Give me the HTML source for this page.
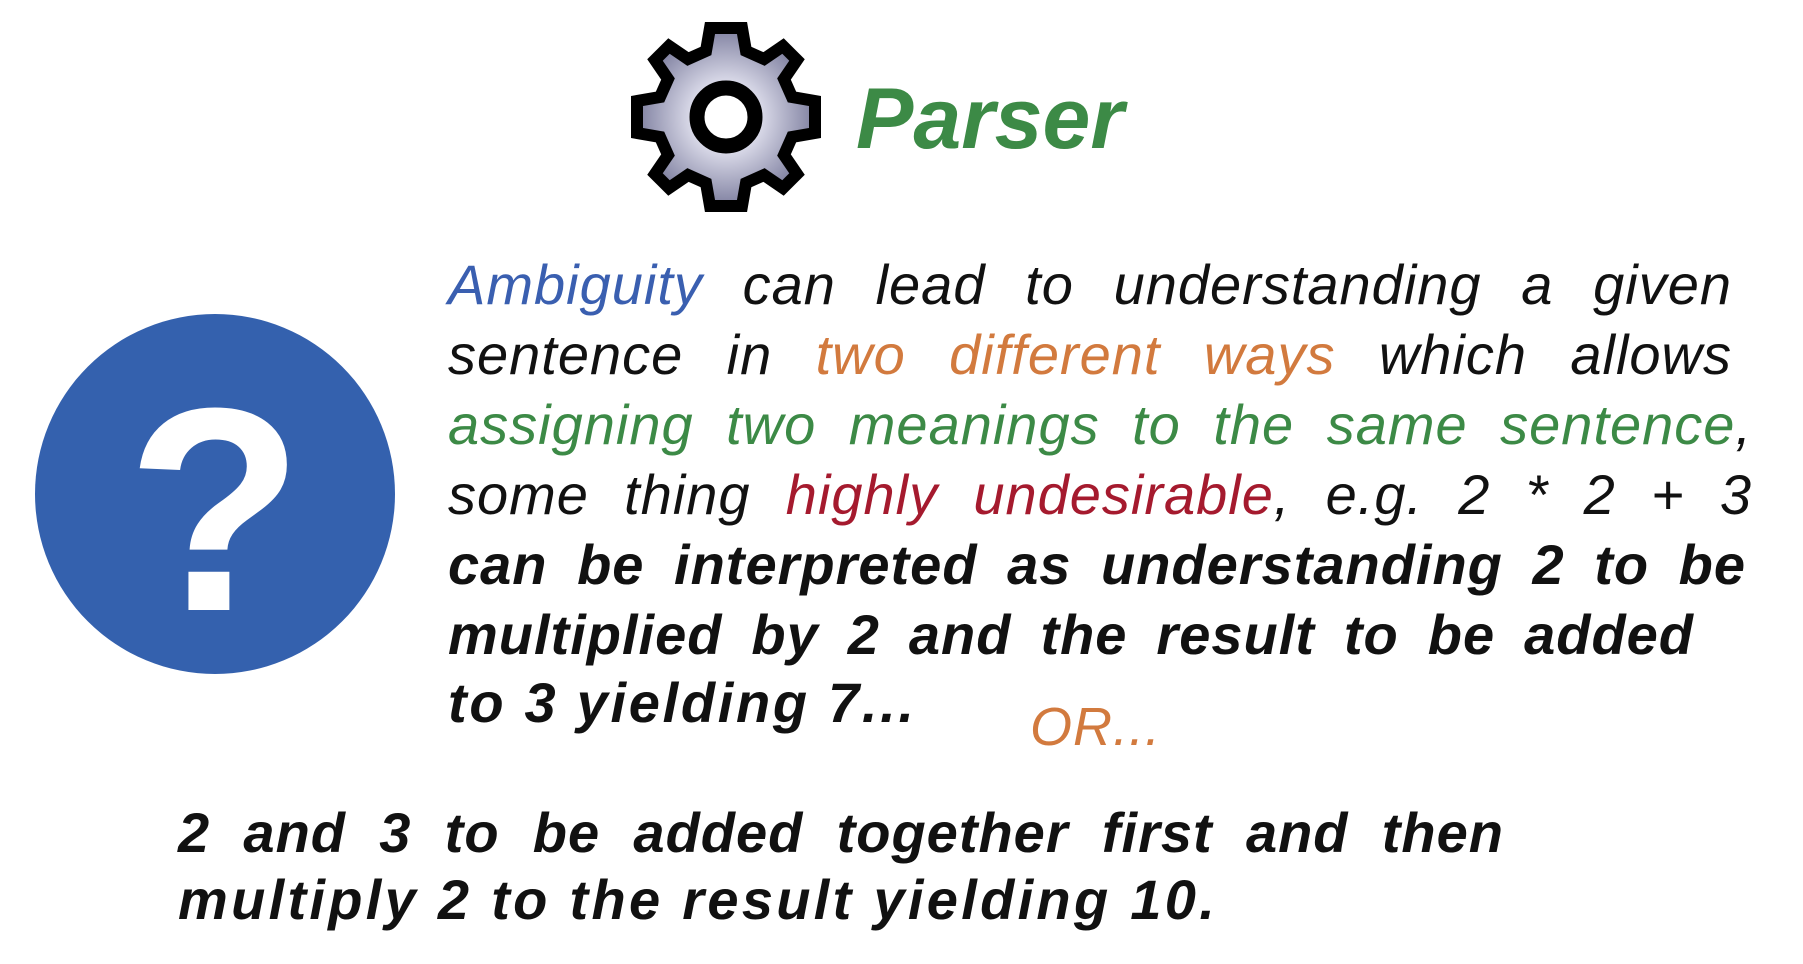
<!DOCTYPE html>
<html><head><meta charset="utf-8"><style>
body{margin:0;width:1803px;height:964px;background:#fff;overflow:hidden;position:relative;font-family:"Liberation Sans",sans-serif;}
.t{position:absolute;font-size:56px;font-style:italic;color:#111;white-space:nowrap;letter-spacing:1px;}
.j{text-align:justify;text-align-last:justify;}
.b{color:#3a5fb0}.o{color:#d27a3e}.g{color:#3c8a46}.r{color:#a51a2e}
</style></head><body>
<svg style="position:absolute;left:0;top:0" width="1803" height="964">
<defs><radialGradient id="gr" cx="50%" cy="50%" r="50%"><stop offset="0.3" stop-color="#e8e8f4"/><stop offset="1" stop-color="#7f80a0"/></radialGradient></defs>
<g transform="translate(726,117)">
<g fill="url(#gr)" stroke="#000" stroke-width="12" stroke-linejoin="miter">
<path d="M-16,-89 L16,-89 L20,-66 L38,-58 L57,-71 L71,-57 L58,-38 L66,-20 L89,-16 L89,16 L66,20 L58,38 L71,57 L57,71 L38,58 L20,66 L16,89 L-16,89 L-20,66 L-38,58 L-57,71 L-71,57 L-58,38 L-66,20 L-89,16 L-89,-16 L-66,-20 L-58,-38 L-71,-57 L-57,-71 L-38,-58 L-20,-66 Z"/>
</g>
<circle r="29" fill="#fff" stroke="#000" stroke-width="15"/>
</g>
<circle cx="215" cy="494" r="180" fill="#3461ae"/>
<text x="215" y="610" text-anchor="middle" font-family="Liberation Sans" font-weight="bold" font-size="290" fill="#fff">?</text>
</svg>
<div class="t g" style="left:856px;top:70px;font-size:86px;font-weight:bold;letter-spacing:0px">Parser</div>
<div class="t j" style="left:448px;top:252px;width:1284px"><span class="b">Ambiguity</span> can lead to understanding a given</div>
<div class="t j" style="left:448px;top:322px;width:1284px">sentence in <span class="o">two different ways</span> which allows</div>
<div class="t j" style="left:448px;top:392px;width:1304px"><span class="g">assigning two meanings to the same sentence</span>,</div>
<div class="t j" style="left:448px;top:462px;width:1304px">some thing <span class="r">highly undesirable</span>, e.g. 2 * 2 + 3</div>
<div class="t j" style="left:448px;top:532px;width:1298px;font-weight:bold">can be interpreted as understanding 2 to be</div>
<div class="t j" style="left:448px;top:602px;width:1246px;font-weight:bold">multiplied by 2 and the result to be added</div>
<div class="t" style="left:448px;top:670px;font-weight:bold;letter-spacing:2.7px">to 3 yielding 7...</div>
<div class="t o" style="left:1030px;top:696px;font-size:54px">OR...</div>
<div class="t j" style="left:178px;top:800px;width:1326px;font-weight:bold">2 and 3 to be added together first and then</div>
<div class="t" style="left:178px;top:867px;font-weight:bold;letter-spacing:3.3px">multiply 2 to the result yielding 10.</div>
</body></html>
